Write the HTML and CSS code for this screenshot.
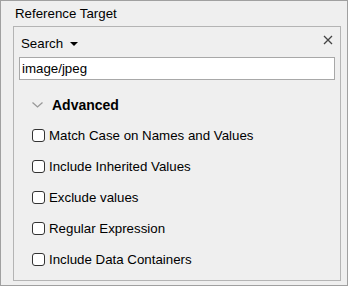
FILE: index.html
```html
<!DOCTYPE html>
<html lang="en">
<head>
    <meta charset="UTF-8">
    <title>Reference Target</title>
    <link rel="stylesheet" href="styles.css">
</head>
<body>
    <div class="panel">
        <div class="title">Reference Target</div>
        <div class="group">
            <div class="search-head">
                <span class="search-label">Search</span>
                <svg class="drop" width="8" height="4" viewBox="0 0 8 4"><path d="M0 0H8L4 4Z" fill="#000"/></svg>
                <svg class="close" width="10" height="10" viewBox="0 0 10 10"><path d="M1 1L9 9M9 1L1 9" stroke="#444" stroke-width="1.3"/></svg>
            </div>
            <input class="search-input" type="text" value="image/jpeg">

            <div class="advanced">
                <svg class="chevron" width="11" height="6" viewBox="0 0 11 6"><path d="M0.5 0.5L5.5 5L10.5 0.5" fill="none" stroke="#999" stroke-width="1.3"/></svg>
                <span>Advanced</span>
            </div>

            <label class="check"><input type="checkbox"><span class="box"></span>Match Case on Names and Values</label>
            <label class="check"><input type="checkbox"><span class="box"></span>Include Inherited Values</label>
            <label class="check"><input type="checkbox"><span class="box"></span>Exclude values</label>
            <label class="check"><input type="checkbox"><span class="box"></span>Regular Expression</label>
            <label class="check"><input type="checkbox"><span class="box"></span>Include Data Containers</label>
        </div>
    </div>
</body>
</html>
```

FILE: styles.css
```css
html, body {
    margin: 0;
    padding: 0;
}

body {
    font-family: "Liberation Sans", Arial, sans-serif;
    font-size: 13.3px;
    color: #000;
    background: #f0f0f0;
}

.panel {
    width: 348px;
    height: 286px;
    box-sizing: border-box;
    border: 1px solid #a0a0a0;
    background: #efefef;
    padding: 0 6px 5px 12px;
}

.title {
    height: 25px;
    line-height: 26px;
    padding-left: 2px;
}

.group {
    height: 255px;
    box-sizing: border-box;
    border: 1px solid #b4b4b4;
    padding: 0 5px 0 5px;
}

.search-head {
    display: flex;
    align-items: center;
    height: 30px;
    padding-left: 2px;
    padding-top: 2px;
    box-sizing: border-box;
}

.search-label {
    margin-right: 7px;
}

.drop {
    margin-top: 1px;
}

.close {
    margin-left: auto;
    margin-right: 2px;
    margin-top: -6px;
}

.search-input {
    display: block;
    width: 316px;
    height: 23px;
    box-sizing: border-box;
    margin: 0;
    border: 1px solid #a8a8a8;
    border-radius: 0;
    background: #fff;
    font: inherit;
    padding: 0 2px;
    outline: none;
}

.advanced {
    display: flex;
    align-items: center;
    height: 30px;
    margin-top: 10px;
    padding-left: 13px;
    font-weight: bold;
    font-size: 14px;
}

.chevron {
    margin-right: 9px;
}

.check {
    display: flex;
    align-items: center;
    height: 31px;
    padding-left: 13px;
}

.check input {
    display: none;
}

.box {
    width: 11px;
    height: 11px;
    border: 1px solid #333;
    border-radius: 3px;
    background: #fff;
    margin-right: 4px;
}
```
